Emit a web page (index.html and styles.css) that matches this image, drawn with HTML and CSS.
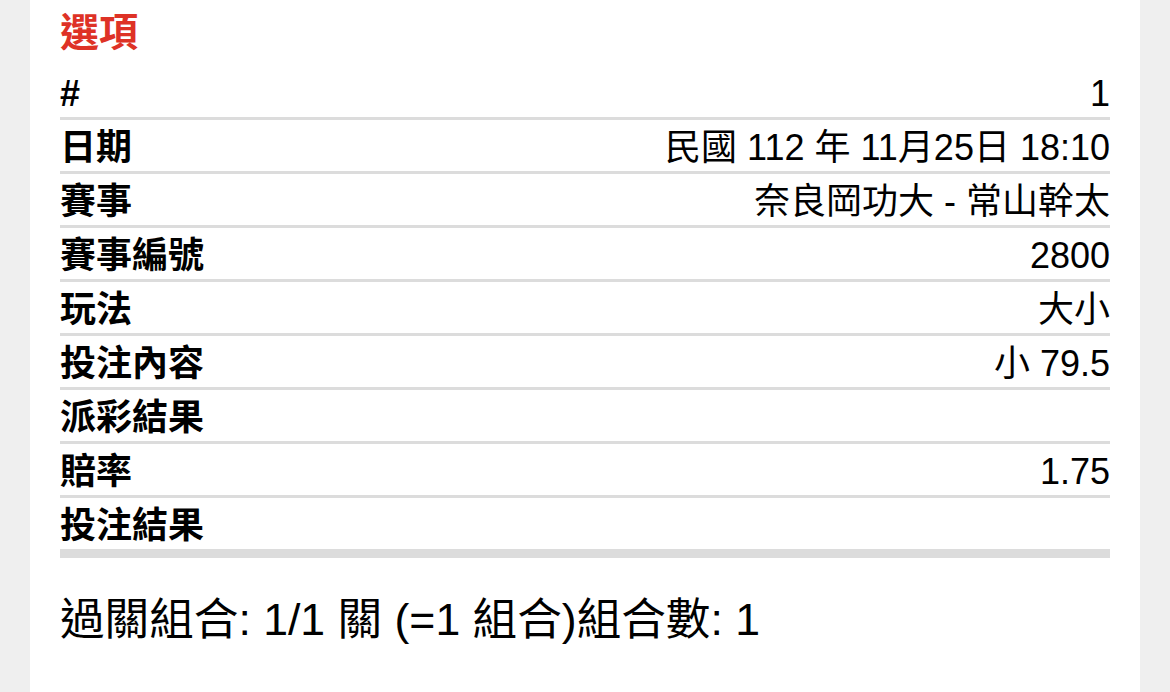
FILE: index.html
```html
<!DOCTYPE html>
<html lang="zh-Hant">
<head>
<meta charset="utf-8">
<title>選項</title>
<link rel="stylesheet" href="styles.css">
</head>
<body>
<div class="card">
  <h2 class="title">選項</h2>
  <div class="list">
    <div class="row"><span class="label">#</span><span class="value">1</span></div>
    <div class="row"><span class="label">日期</span><span class="value">民國 112 年 11月25日 18:10</span></div>
    <div class="row"><span class="label">賽事</span><span class="value">奈良岡功大 - 常山幹太</span></div>
    <div class="row"><span class="label">賽事編號</span><span class="value">2800</span></div>
    <div class="row"><span class="label">玩法</span><span class="value">大小</span></div>
    <div class="row"><span class="label">投注內容</span><span class="value">小 79.5</span></div>
    <div class="row"><span class="label">派彩結果</span><span class="value"></span></div>
    <div class="row"><span class="label">賠率</span><span class="value">1.75</span></div>
    <div class="row row-last"><span class="label">投注結果</span><span class="value"></span></div>
  </div>
  <p class="summary">過關組合: 1/1 關 (=1 組合)組合數: 1</p>
</div>
</body>
</html>
```

FILE: styles.css
```css
html, body {
  margin: 0;
  padding: 0;
  background: #efefef;
  height: 100%;
}
body {
  font-family: "Liberation Sans", "Noto Sans CJK TC", sans-serif;
  color: #000;
}
.card {
  margin: 0 30px;
  background: #fff;
  min-height: 100vh;
  padding: 8px 30px 0;
  box-sizing: border-box;
}
.title {
  margin: 0 0 8px;
  font-size: 39px;
  line-height: 50px;
  font-weight: 700;
  color: #de3226;
}
.list {
  display: flex;
  flex-direction: column;
}
.row {
  display: flex;
  justify-content: space-between;
  align-items: center;
  box-sizing: content-box;
  height: 48px;
  padding-top: 3px;
  border-bottom: 3px solid #dcdcdc;
  font-size: 36px;
  line-height: 51px;
}
.row-last {
  border-bottom-width: 9px;
}
.label {
  font-weight: 700;
}
.value {
  font-weight: 400;
}
.summary {
  margin: 32px 0 0;
  font-size: 44.6px;
  line-height: 60px;
}
```
